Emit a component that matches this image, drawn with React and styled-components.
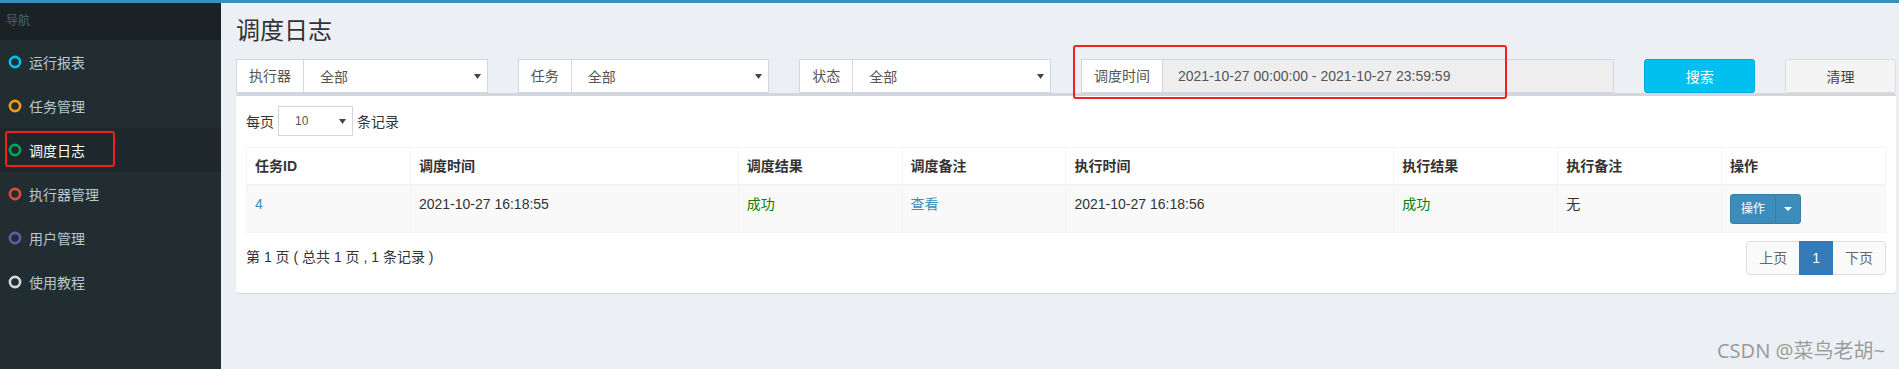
import React from 'react'
import styled, { createGlobalStyle } from 'styled-components'

const GlobalStyle = createGlobalStyle`
  html, body {
    margin: 0;
    padding: 0;
    overflow: hidden;
  }
  body {
    background: #ecf0f5;
    font-family: "Liberation Sans", "Noto Sans CJK SC", sans-serif;
    font-size: 14px;
    color: #333;
  }
  * {
    box-sizing: border-box;
  }
`

const navItems = [
  { label: '运行报表', color: '#00c0ef' },
  { label: '任务管理', color: '#f39c12' },
  { label: '调度日志', color: '#00a65a', active: true },
  { label: '执行器管理', color: '#dd4b39' },
  { label: '用户管理', color: '#605ca8' },
  { label: '使用教程', color: '#d2d6de' },
]

const filters = [
  { label: '执行器', value: '全部' },
  { label: '任务', value: '全部' },
  { label: '状态', value: '全部' },
]

const columns = [
  { title: '任务ID', width: '10%' },
  { title: '调度时间', width: '20%' },
  { title: '调度结果', width: '10%' },
  { title: '调度备注', width: '10%' },
  { title: '执行时间', width: '20%' },
  { title: '执行结果', width: '10%' },
  { title: '执行备注', width: '10%' },
  { title: '操作', width: '10%' },
]

const Caret = ({ color = '#444', w = 7, h = 5 }) => (
  <svg width={w} height={h} viewBox={`0 0 ${w} ${h}`}>
    <polygon points={`0,0 ${w},0 ${w / 2},${h}`} fill={color} />
  </svg>
)

const CircleIcon = ({ color }) => (
  <NavIcon viewBox="0 0 14 14">
    <circle cx="7" cy="7" r="5.1" fill="none" stroke={color} strokeWidth="2.6" />
  </NavIcon>
)

const App = () => {
  return (
    <Page>
      <GlobalStyle />
      <TopBar />
      <Layout>
        <Sidebar>
          <NavHeader>导航</NavHeader>
          <NavList>
            {navItems.map(item => (
              <NavItem key={item.label} $active={item.active}>
                <CircleIcon color={item.color} />
                {item.label}
                {item.active && <Mark $left={5} $top={3} $w={110} $h={36} />}
              </NavItem>
            ))}
          </NavList>
        </Sidebar>

        <Main>
          <ContentHeader>
            <Title>调度日志</Title>
          </ContentHeader>
          <Content>
            <FilterRow>
              {filters.map(f => (
                <Col key={f.label} $span={2}>
                  <InputGroup>
                    <Addon>{f.label}</Addon>
                    <Select>
                      {f.value}
                      <Caret />
                    </Select>
                  </InputGroup>
                </Col>
              ))}
              <Col $span={4}>
                <InputGroup>
                  <Addon>调度时间</Addon>
                  <RangeInput>2021-10-27 00:00:00 - 2021-10-27 23:59:59</RangeInput>
                </InputGroup>
                <Mark $left={7} $top={-14} $w={434} $h={54} />
              </Col>
              <Col $span={1}>
                <Button $variant="info">搜索</Button>
              </Col>
              <Col $span={1}>
                <Button>清理</Button>
              </Col>
            </FilterRow>

            <Box>
              <BoxBody>
                <LengthRow>
                  每页
                  <Select $small>
                    10
                    <Caret />
                  </Select>
                  条记录
                </LengthRow>

                <Table>
                  <colgroup>
                    {columns.map(c => (
                      <col key={c.title} style={{ width: c.width }} />
                    ))}
                  </colgroup>
                  <thead>
                    <tr>
                      {columns.map(c => (
                        <Th key={c.title}>{c.title}</Th>
                      ))}
                    </tr>
                  </thead>
                  <tbody>
                    <Tr>
                      <Td><Link>4</Link></Td>
                      <Td>2021-10-27 16:18:55</Td>
                      <Td><Success>成功</Success></Td>
                      <Td><Link>查看</Link></Td>
                      <Td>2021-10-27 16:18:56</Td>
                      <Td><Success>成功</Success></Td>
                      <Td>无</Td>
                      <Td>
                        <BtnGroup>
                          <SmallBtn>操作</SmallBtn>
                          <SmallBtn $caret>
                            <Caret color="#fff" w={8} h={4} />
                          </SmallBtn>
                        </BtnGroup>
                      </Td>
                    </Tr>
                  </tbody>
                </Table>

                <FooterRow>
                  <Info>第 1 页 ( 总共 1 页 , 1 条记录 )</Info>
                  <Pagination>
                    <PageLink>上页</PageLink>
                    <PageLink $active>1</PageLink>
                    <PageLink>下页</PageLink>
                  </Pagination>
                </FooterRow>
              </BoxBody>
            </Box>
          </Content>
        </Main>
      </Layout>
      <Watermark>CSDN @菜鸟老胡~</Watermark>
    </Page>
  )
}

// * Styling
const Page = styled.div`
  position: relative;
  display: flex;
  flex-direction: column;
  height: 100vh;
`

const TopBar = styled.div`
  flex: none;
  height: 3px;
  background: #3c8dbc;
`

const Layout = styled.div`
  flex: 1;
  display: flex;
  min-height: 0;
`

const Sidebar = styled.aside`
  flex: none;
  width: 221px;
  background: #222d32;
`

const NavHeader = styled.div`
  background: #1a2226;
  color: #4b646f;
  font-size: 12px;
  line-height: 17px;
  padding: 10px 15px 10px 6px;
`

const NavList = styled.ul`
  list-style: none;
  margin: 0;
  padding: 0;
`

const NavItem = styled.li`
  position: relative;
  display: flex;
  align-items: center;
  height: 44px;
  padding: 0 5px 0 8px;
  font-size: 14px;
  color: ${p => (p.$active ? '#fff' : '#b8c7ce')};
  background: ${p => (p.$active ? '#1e282c' : 'transparent')};
`

const NavIcon = styled.svg`
  flex: none;
  width: 14px;
  height: 14px;
  margin-right: 7px;
`

const Mark = styled.span`
  position: absolute;
  left: ${p => p.$left}px;
  top: ${p => p.$top}px;
  width: ${p => p.$w}px;
  height: ${p => p.$h}px;
  border: 2px solid #f2201c;
  border-radius: 3px;
  pointer-events: none;
`

const Main = styled.main`
  flex: none;
  width: 1690px;
`

const ContentHeader = styled.section`
  padding: 15px 15px 0;
`

const Title = styled.h1`
  margin: 0;
  font-size: 24px;
  line-height: 1.1;
  font-weight: 400;
  color: #333;
`

const Content = styled.section`
  padding: 15px;
`

const FilterRow = styled.div`
  display: grid;
  grid-template-columns: repeat(12, 1fr);
  margin: 0 -15px;
`

const Col = styled.div`
  position: relative;
  grid-column: span ${p => p.$span};
  padding: 0 15px;
`

const InputGroup = styled.div`
  display: flex;
  height: 34px;
`

const Addon = styled.span`
  flex: none;
  padding: 6px 12px;
  border: 1px solid #d2d6de;
  border-right: 0;
  background: #fff;
  color: #555;
  font-size: 14px;
  line-height: 20px;
`

const Select = styled.div`
  flex: 1;
  display: flex;
  align-items: center;
  justify-content: space-between;
  border: 1px solid #d2d6de;
  background: #fff;
  color: #555;
  font-size: ${p => (p.$small ? '12px' : '14px')};
  padding: 0 6px 0 16px;
  ${p => p.$small && `
    flex: none;
    width: 75px;
    height: 30px;
    margin: 0 4px;
  `}
`

const RangeInput = styled.div`
  flex: 1;
  background: #eee;
  border: 1px solid #d2d6de;
  color: #555;
  padding: 6px 15px;
  line-height: 20px;
  white-space: nowrap;
  overflow: hidden;
`

const Button = styled.button`
  display: block;
  width: 100%;
  height: 34px;
  border-radius: 3px;
  font-family: inherit;
  font-size: 14px;
  border: 1px solid ${p => (p.$variant === 'info' ? '#00acd6' : '#ddd')};
  background: ${p => (p.$variant === 'info' ? '#00c0ef' : '#f4f4f4')};
  color: ${p => (p.$variant === 'info' ? '#fff' : '#444')};
`

const Box = styled.div`
  background: #fff;
  border-top: 3px solid #d2d6de;
  border-radius: 3px;
  box-shadow: 0 1px 1px rgba(0, 0, 0, 0.1);
`

const BoxBody = styled.div`
  padding: 10px;
`

const LengthRow = styled.div`
  display: flex;
  align-items: center;
  height: 30px;
  font-size: 14px;
`

const Table = styled.table`
  width: 100%;
  margin: 11px 0 6px;
  border-collapse: collapse;
  border: 1px solid #f4f4f4;
  table-layout: fixed;
`

const Th = styled.th`
  text-align: left;
  padding: 8px;
  line-height: 20px;
  font-weight: 700;
  border: 1px solid #f4f4f4;
  border-bottom-width: 2px;
`

const Tr = styled.tr`
  background: #f9f9f9;
`

const Td = styled.td`
  padding: 8px;
  line-height: 20px;
  vertical-align: top;
  border: 1px solid #f4f4f4;
`

const Link = styled.a`
  color: #3c8dbc;
`

const Success = styled.span`
  color: green;
`

const BtnGroup = styled.div`
  display: inline-flex;
`

const SmallBtn = styled.span`
  display: flex;
  align-items: center;
  justify-content: center;
  height: 30px;
  padding: ${p => (p.$caret ? '0 8px' : '0 10px')};
  background: #3c8dbc;
  border: 1px solid #367fa9;
  color: #fff;
  font-size: 12px;
  border-radius: ${p => (p.$caret ? '0 3px 3px 0' : '3px 0 0 3px')};
  margin-left: ${p => (p.$caret ? '-1px' : '0')};
`

const FooterRow = styled.div`
  display: flex;
  justify-content: space-between;
  align-items: flex-start;
  margin-bottom: 6px;
`

const Info = styled.div`
  padding-top: 8px;
  line-height: 20px;
  white-space: nowrap;
`

const Pagination = styled.ul`
  display: flex;
  list-style: none;
  margin: 2px 0;
  padding: 0;
`

const PageLink = styled.li`
  padding: 6px 12px;
  line-height: 20px;
  margin-left: -1px;
  border: 1px solid ${p => (p.$active ? '#337ab7' : '#ddd')};
  background: ${p => (p.$active ? '#337ab7' : '#fafafa')};
  color: ${p => (p.$active ? '#fff' : '#666')};
  position: relative;
  z-index: ${p => (p.$active ? 1 : 0)};
  &:first-child {
    margin-left: 0;
    border-radius: 4px 0 0 4px;
  }
  &:last-child {
    border-radius: 0 4px 4px 0;
  }
`

const Watermark = styled.div`
  position: absolute;
  right: 14px;
  bottom: 6px;
  font-family: "Noto Sans", "Noto Sans CJK SC", sans-serif;
  font-size: 20px;
  line-height: 24px;
  color: #9a9a9a;
  text-shadow: 0 0 1px #fff;
  pointer-events: none;
`

export default App
